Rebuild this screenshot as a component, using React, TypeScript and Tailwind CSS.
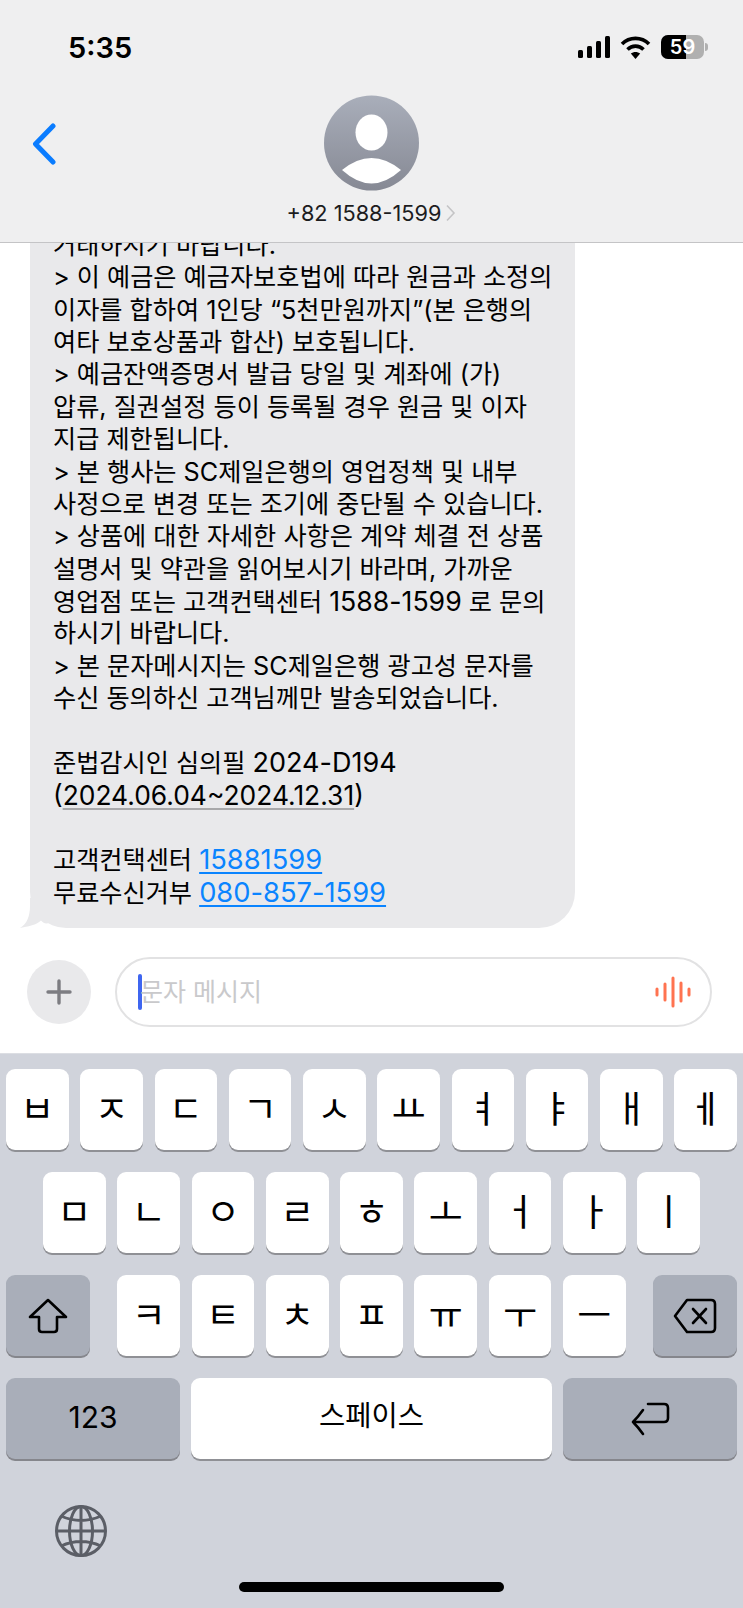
const FONT = "font-['Inter','Noto_Sans_CJK_KR',sans-serif]";

const MESSAGE_LINES: React.ReactNode[] = [
  "거래하시기 바랍니다.",
  "> 이 예금은 예금자보호법에 따라 원금과 소정의",
  "이자를 합하여 1인당 “5천만원까지”(본 은행의",
  "여타 보호상품과 합산) 보호됩니다.",
  "> 예금잔액증명서 발급 당일 및 계좌에 (가)",
  "압류, 질권설정 등이 등록될 경우 원금 및 이자",
  "지급 제한됩니다.",
  "> 본 행사는 SC제일은행의 영업정책 및 내부",
  "사정으로 변경 또는 조기에 중단될 수 있습니다.",
  "> 상품에 대한 자세한 사항은 계약 체결 전 상품",
  "설명서 및 약관을 읽어보시기 바라며, 가까운",
  <>영업점 또는 고객컨택센터 <span className="text-[26.7px]">1588-1599</span> 로 문의</>,
  "하시기 바랍니다.",
  "> 본 문자메시지는 SC제일은행 광고성 문자를",
  "수신 동의하신 고객님께만 발송되었습니다.",
  "",
  <>준법감시인 심의필 <span className="text-[27px]">2024-D194</span></>,
];

const ROW_1 = ["ㅂ", "ㅈ", "ㄷ", "ㄱ", "ㅅ", "ㅛ", "ㅕ", "ㅑ", "ㅐ", "ㅔ"];
const ROW_2 = ["ㅁ", "ㄴ", "ㅇ", "ㄹ", "ㅎ", "ㅗ", "ㅓ", "ㅏ", "ㅣ"];
const ROW_3 = ["ㅋ", "ㅌ", "ㅊ", "ㅍ", "ㅠ", "ㅜ", "ㅡ"];

function StatusBar() {
  return (
    <div className="flex h-[94px] items-start justify-between pl-[68px] pr-[35px] pt-[31px]">
      <span className="text-[29px] font-semibold leading-[34px] text-black">5:35</span>
      <div className="flex items-center gap-[10px] pt-[4px]">
        <svg width="32" height="22" viewBox="0 0 32 22" fill="#000">
          <rect x="0" y="14" width="5" height="8" rx="1.5" />
          <rect x="9" y="10" width="5" height="12" rx="1.5" />
          <rect x="18" y="5" width="5" height="17" rx="1.5" />
          <rect x="27" y="0" width="5" height="22" rx="1.5" />
        </svg>
        <svg width="31" height="23" viewBox="0 0 31 23" fill="none" stroke="#000" strokeWidth="3.6">
          <path d="M2 8 C9.5 0.5 21.5 0.5 29 8" />
          <path d="M7.5 13.5 C12 9 19 9 23.5 13.5" />
          <path d="M15.5 23 L10.8 17.6 C13.5 15.4 17.5 15.4 20.2 17.6 Z" fill="#000" stroke="none" />
        </svg>
        <div className="flex items-center gap-[1px]">
          <div className="relative flex h-[24px] w-[43px] items-center justify-center overflow-hidden rounded-[7px] bg-[#b0b0b0]">
            <div className="absolute inset-y-0 left-0 w-[25px] bg-black" />
            <span className="relative text-[20px] font-semibold leading-none text-white">59</span>
          </div>
          <div className="h-[8px] w-[3px] rounded-r-full bg-[#b0b0b0]" />
        </div>
      </div>
    </div>
  );
}

function Header() {
  return (
    <header className="h-[243px] shrink-0 border-b border-[#c4c4c6] bg-[#efeff0]">
      <StatusBar />
      <div className="relative flex flex-col items-center">
        <button className="absolute left-[32px] top-[29px]">
          <svg width="24" height="42" viewBox="0 0 24 42" fill="none" stroke="#0a7cff" strokeWidth="5" strokeLinecap="round" strokeLinejoin="round">
            <path d="M21 3 L3.5 21 L21 39" />
          </svg>
        </button>
        <svg width="95" height="96" viewBox="0 0 95 96" className="mt-[1px]">
          <defs>
            <linearGradient id="avatar" x1="0" y1="0" x2="0" y2="1">
              <stop offset="0" stopColor="#a9aeba" />
              <stop offset="1" stopColor="#868994" />
            </linearGradient>
          </defs>
          <circle cx="47.5" cy="48" r="47.5" fill="url(#avatar)" />
          <ellipse cx="47.5" cy="37.5" rx="16" ry="18" fill="#fff" />
          <path d="M18 75 Q47.5 51 77 75 Q62 88.5 47.5 88.5 Q33 88.5 18 75Z" fill="#fff" />
        </svg>
        <div className="mt-[8px] flex items-center gap-[4px]">
          <span className="text-[21.7px] leading-[28px] text-[#1c1c1e]">+82 1588-1599</span>
          <svg width="11" height="18" viewBox="0 0 11 18" fill="none" stroke="#c4c4c6" strokeWidth="1.6">
            <path d="M2 1.5 L9 9 L2 16.5" />
          </svg>
        </div>
      </div>
    </header>
  );
}

function MessageBubble() {
  return (
    <div className="relative ml-[30px] w-[545px] shrink-0 rounded-[36px] bg-[#e9e9eb] pb-[19px] pl-[23px] pt-[60px] text-[25.2px] leading-[32.4px] text-black">
      <svg width="30" height="30" viewBox="0 0 30 30" className="absolute bottom-0 left-[-10px]" fill="#e9e9eb">
        <path d="M10 0 H30 V24 C27 26.5 24 26 21 22.5 C18 25.5 14 27.5 0 30 C7 26 10 18 10 8 Z" />
      </svg>
      <div className="relative">
        {MESSAGE_LINES.map((line, i) => (
          <div key={i} className="h-[32.4px] whitespace-nowrap">{line}</div>
        ))}
        <div className="h-[32.4px] whitespace-nowrap text-[26.4px]">
          (<span className="underline decoration-[#a8a8aa] decoration-2 underline-offset-[3px]">2024.06.04~2024.12.31</span>)
        </div>
        <div className="h-[32.4px]" />
        <div className="h-[32.4px] whitespace-nowrap">
          고객컨택센터 <span className="text-[27.3px] text-[#0a84ff] underline decoration-2 underline-offset-[3px]">15881599</span>
        </div>
        <div className="h-[32.4px] whitespace-nowrap">
          무료수신거부 <span className="text-[27.3px] text-[#0a84ff] underline decoration-2 underline-offset-[3px]">080-857-1599</span>
        </div>
      </div>
    </div>
  );
}

function Composer() {
  return (
    <div className="flex h-[108px] shrink-0 items-start gap-[24px] pl-[27px] pr-[31px] pt-[12px]">
      <div className="mt-[3px] flex h-[64px] w-[64px] shrink-0 items-center justify-center rounded-full bg-[#e9e9eb]">
        <svg width="26" height="26" viewBox="0 0 26 26" stroke="#7d7d82" strokeWidth="3.4" strokeLinecap="round">
          <path d="M13 2 V24 M2 13 H24" />
        </svg>
      </div>
      <div className="flex h-[70px] flex-1 items-center rounded-full border-2 border-[#e2e2e3] pl-[21px] pr-[19px]">
        <div className="h-[36px] w-[4px] rounded-full bg-[#3f66f0]" />
        <span className="-ml-[2px] flex-1 text-[25px] leading-none text-[#c9c9cb]">문자 메시지</span>
        <svg width="36" height="32" viewBox="0 0 36 32" stroke="#ff7350" strokeWidth="3" strokeLinecap="round">
          <path d="M2 13 V19 M10 8 V24 M18 2 V30 M26 7 V25 M34 13 V19" />
        </svg>
      </div>
    </div>
  );
}

function Key({ label }: { label: string }) {
  return (
    <div className="flex h-[81px] w-[62.7px] items-center justify-center rounded-[9px] bg-white text-[37px] leading-none text-black shadow-[0_2px_0_#8f9095]">
      {label}
    </div>
  );
}

function GrayKey({ children, className }: { children: React.ReactNode; className: string }) {
  return (
    <div className={`flex h-[81px] items-center justify-center rounded-[9px] bg-[#a9aeb9] shadow-[0_2px_0_#85868c] ${className}`}>
      {children}
    </div>
  );
}

function Keyboard() {
  return (
    <div className="flex flex-1 flex-col border-t border-[#dcdee3] bg-[#d0d3db] px-[6px] pt-[15px]">
      <div className="flex justify-between">
        {ROW_1.map((k) => <Key key={k} label={k} />)}
      </div>
      <div className="mt-[22px] flex justify-center gap-[11.6px]">
        {ROW_2.map((k) => <Key key={k} label={k} />)}
      </div>
      <div className="mt-[22px] flex justify-between">
        <GrayKey className="w-[84px]">
          <svg width="40" height="36" viewBox="0 0 40 36" fill="none" stroke="#000" strokeWidth="2.6" strokeLinejoin="round">
            <path d="M20 2 L2 19 H11 V31 Q11 34 14 34 H26 Q29 34 29 31 V19 H38 Z" />
          </svg>
        </GrayKey>
        <div className="flex gap-[11.6px]">
          {ROW_3.map((k) => <Key key={k} label={k} />)}
        </div>
        <GrayKey className="w-[84px]">
          <svg width="44" height="36" viewBox="0 0 44 36" fill="none" stroke="#000" strokeWidth="2.6" strokeLinejoin="round" strokeLinecap="round">
            <path d="M14 2 H38 Q42 2 42 6 V30 Q42 34 38 34 H14 L2 18 Z" />
            <path d="M20 11 L33 25 M33 11 L20 25" />
          </svg>
        </GrayKey>
      </div>
      <div className="mt-[22px] flex justify-between">
        <GrayKey className="w-[174px] pb-[4px]">
          <span className="text-[30px] leading-none text-black">123</span>
        </GrayKey>
        <div className="flex h-[81px] w-[361px] items-start justify-center rounded-[9px] bg-white pt-[21px] text-[28.5px] leading-[34px] text-black shadow-[0_2px_0_#8f9095]">
          스페이스
        </div>
        <GrayKey className="w-[174px]">
          <svg width="40" height="34" viewBox="0 0 40 34" fill="none" stroke="#000" strokeWidth="2.6" strokeLinecap="round" strokeLinejoin="round">
            <path d="M18 2 H34 Q38 2 38 6 V16 Q38 20 34 20 H3 M13 8 Q8 15 3 20 Q8 25 13 32" />
          </svg>
        </GrayKey>
      </div>
      <div className="mt-[46px] flex pl-[49px]">
        <svg width="52" height="52" viewBox="0 0 52 52" fill="none" stroke="#5b5e66" strokeWidth="3">
          <circle cx="26" cy="26" r="24.5" />
          <ellipse cx="26" cy="26" rx="11.5" ry="24.5" />
          <path d="M26 1.5 V50.5 M1.5 26 H50.5 M6 11 Q26 20 46 11 M6 41 Q26 32 46 41" />
        </svg>
      </div>
      <div className="mt-[25px] flex justify-center">
        <div className="h-[10px] w-[265px] rounded-full bg-black" />
      </div>
    </div>
  );
}

export default function App() {
  return (
    <div className={`flex h-[1608px] w-[743px] flex-col overflow-hidden bg-white ${FONT}`}>
      <Header />
      <div className="flex h-[702px] shrink-0 flex-col justify-end overflow-hidden pb-[17px]">
        <MessageBubble />
      </div>
      <Composer />
      <Keyboard />
    </div>
  );
}
